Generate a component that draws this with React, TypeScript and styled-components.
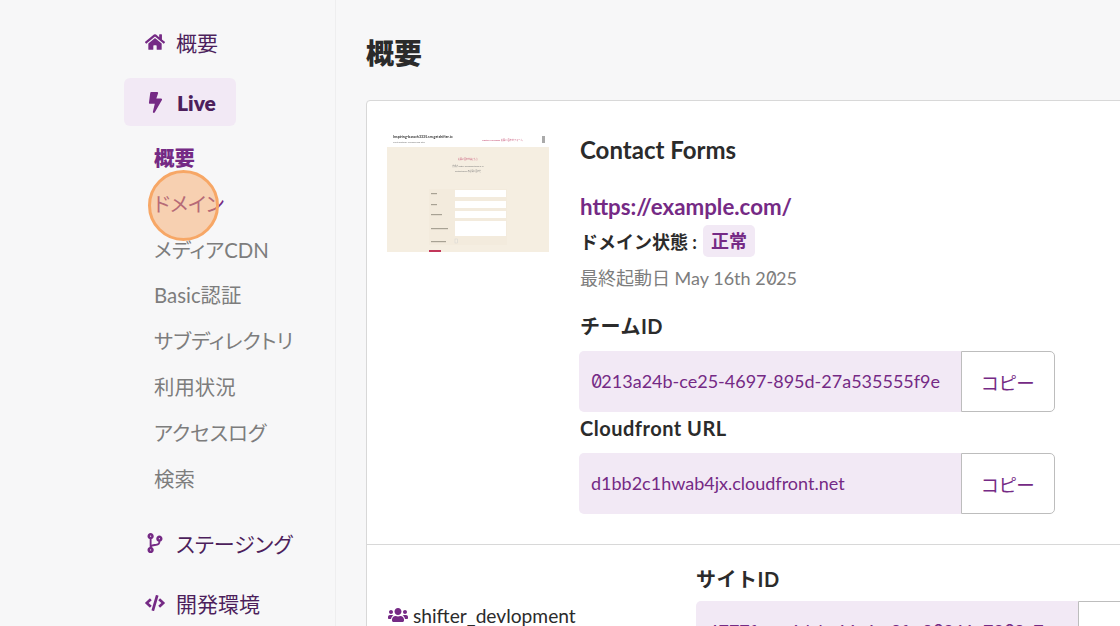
import styled, { createGlobalStyle } from "styled-components"
import { FaBolt, FaCode, FaCodeBranch, FaHome, FaUsers } from "react-icons/fa"

const FONT = `"Lato", "Noto Sans CJK JP", sans-serif`

const Global = createGlobalStyle`
    html, body {
        margin: 0;
        padding: 0;
        height: 626px;
        overflow: hidden;
        background: #f7f7f8;
        font-family: ${FONT};
    }
    * { box-sizing: border-box; }
`

const Page = styled.div`
    display: flex;
    width: 1120px;
    height: 626px;
    overflow: hidden;
`

const Sidebar = styled.nav`
    position: relative;
    flex: 0 0 336px;
    height: 626px;
    padding: 18px 0 0 124px;
    border-right: 1px solid #eeeeef;
    overflow: hidden;
    font-feature-settings: "palt";
`

const NavItem = styled.div<{ $active?: boolean }>`
    display: flex;
    align-items: center;
    gap: 11px;
    width: 112px;
    height: 48px;
    padding-left: 21px;
    border-radius: 6px;
    white-space: nowrap;
    font-size: 21px;
    font-weight: ${p => (p.$active ? 800 : 400)};
    color: #4d1f5c;
    background: ${p => (p.$active ? "#f2e9f5" : "transparent")};
    svg { flex: none; color: #752a85; }
`

const NavGroup = styled.div<{ $gap: number }>`
    margin-top: ${p => p.$gap}px;
`

const SubList = styled.div`
    display: flex;
    flex-direction: column;
    padding: 9px 0 0 30px;
`

const SubItem = styled.div<{ $state?: "current" | "hover" }>`
    height: 45.8px;
    line-height: 46px;
    white-space: nowrap;
    font-size: 20.4px;
    font-weight: ${p => (p.$state === "current" ? 800 : 400)};
    color: ${p => (p.$state ? "#752a85" : "#7d7d7d")};
`

const ClickMark = styled.div`
    position: absolute;
    left: 148px;
    top: 170px;
    width: 71px;
    height: 71px;
    border-radius: 50%;
    border: 3px solid #f7a766;
    background: rgba(248, 170, 105, 0.5);
`

const Main = styled.main`
    flex: 1;
    min-width: 0;
    padding: 30px 0 0 30px;
`

const Title = styled.h1`
    margin: 0;
    height: 70px;
    line-height: 46px;
    font-size: 28px;
    font-weight: 800;
    color: #2b2b2b;
`

const Card = styled.section`
    width: 900px;
    background: #fff;
    border: 1px solid #d8d8d8;
    border-radius: 4px 0 0 0;
`

const TopRow = styled.div`
    display: flex;
    height: 444px;
    padding: 31px 0 0 20px;
    border-bottom: 1px solid #d8d8d8;
`

const Thumb = styled.svg`
    flex: none;
    display: block;
    width: 162px;
    height: 120px;
    filter: blur(0.35px);
`

const Info = styled.div`
    display: flex;
    flex-direction: column;
    margin-left: 31px;
    width: 475px;
`

const SiteName = styled.div`
    height: 36px;
    line-height: 35px;
    font-size: 24px;
    font-weight: 700;
    color: #2b2b2b;
`

const SiteUrl = styled.a`
    margin-top: 22px;
    height: 34px;
    line-height: 34px;
    font-size: 22.3px;
    font-weight: 700;
    color: #752a85;
`

const StatusRow = styled.div`
    display: flex;
    align-items: center;
    height: 34px;
    font-size: 18px;
    font-weight: 700;
    color: #2b2b2b;
`

const StatusBadge = styled.span`
    margin-left: 6px;
    padding: 0 8px;
    height: 32px;
    line-height: 32px;
    border-radius: 5px;
    background: #f2e9f5;
    color: #752a85;
`

const Started = styled.div`
    margin-top: 2px;
    height: 36px;
    line-height: 36px;
    font-size: 18px;
    color: #7d7d7d;
`

const FieldLabel = styled.div<{ $top: number }>`
    margin-top: ${p => p.$top}px;
    height: 32px;
    line-height: 32px;
    font-size: 20px;
    font-weight: 700;
    letter-spacing: 0.5px;
    color: #2b2b2b;
`

const CopyRow = styled.div<{ $gap: number; $left: number }>`
    display: flex;
    flex: none;
    height: 61px;
    margin: ${p => p.$gap}px 0 0 ${p => p.$left}px;
`

const CopyValue = styled.div`
    flex: 1;
    display: block;
    line-height: 61px;
    min-width: 0;
    padding-left: 12px;
    white-space: nowrap;
    overflow: hidden;
    border-radius: 5px 0 0 5px;
    background: #f2e9f5;
    color: #752a85;
    font-size: 18px;
`

const CopyButton = styled.button`
    flex: 0 0 94px;
    padding: 0;
    border: 1px solid #bdbdbd;
    border-radius: 0 5px 5px 0;
    background: #fff;
    color: #752a85;
    font-family: ${FONT};
    font-size: 18.5px;
    font-feature-settings: "palt";
`

const BottomRow = styled.div`
    display: flex;
    padding: 18px 0 0 21px;
`

const Owner = styled.div`
    display: flex;
    align-items: center;
    gap: 5px;
    flex: 0 0 308px;
    height: 32px;
    margin-top: 36px;
    font-size: 19.2px;
    color: #2b2b2b;
    svg { flex: none; color: #752a85; }
`

const SiteIdCol = styled.div`
    display: flex;
    flex-direction: column;
    width: 476px;
    flex: none;
`

// the reference font draws its zero with a slash, Lato has none
const Zero = styled.span`
    font-family: "Inter", sans-serif;
    font-feature-settings: "zero";
    letter-spacing: -1px;
`

const Digits = ({ text }: { text: string }) => (
    <>
        {text.split(/(0)/).map((part, id) =>
            part === "0" ? <Zero key={id}>0</Zero> : part
        )}
    </>
)

const Copy = ({ value, gap = 9, left = -1 }: { value: string; gap?: number; left?: number }) => (
    <CopyRow $gap={gap} $left={left}>
        <CopyValue><Digits text={value} /></CopyValue>
        <CopyButton>コピー</CopyButton>
    </CopyRow>
)

// screenshot of the site, drawn small
const SiteThumb = () => (
    <Thumb viewBox="0 0 162 120">
        <rect width="162" height="120" fill="#fff" />
        <text x="6" y="5.5" fontSize="3.6" fontWeight="700" fill="#333">Inspiring-bassch3335.sm.getshifter.io</text>
        <text x="6" y="10.5" fontSize="2.6" fill="#777">Just another WordPress site</text>
        <text x="95" y="8.5" fontSize="2.2" fill="#c2456b">Ligature  Flexispace  お問い合わせフォーム</text>
        <rect x="155" y="4" width="3" height="7" fill="#aaa" />
        <rect y="15" width="162" height="105" fill="#f5eee1" />
        <text x="81" y="27.5" fontSize="2" textAnchor="middle" fill="#c2456b">お問い合わせはこちら</text>
        <text x="81" y="35" fontSize="1.9" textAnchor="middle" fill="#777">作成者 shifter_devlopment  2025.5.16</text>
        <text x="81" y="40" fontSize="1.9" textAnchor="middle" fill="#777">Contact Forms のお問い合わせ</text>
        <rect x="42" y="57" width="78" height="56" fill="#f3ebdd" />
        <rect x="68" y="58" width="51" height="7" fill="#fff" />
        <rect x="68" y="69" width="51" height="7" fill="#fff" />
        <rect x="68" y="79" width="51" height="7" fill="#fff" />
        <rect x="68" y="89" width="51" height="15" fill="#fff" />
        <rect x="68" y="107" width="2.5" height="4" fill="#f5eee1" stroke="#ccc" strokeWidth="0.4" />
        <rect x="44" y="61" width="6" height="1.2" fill="#a8a294" />
        <rect x="44" y="72" width="6" height="1.2" fill="#a8a294" />
        <rect x="44" y="82" width="11" height="1.2" fill="#a8a294" />
        <rect x="44" y="96" width="17" height="1.2" fill="#a8a294" />
        <rect x="44" y="109" width="15" height="1.2" fill="#a8a294" />
        <rect x="42" y="118" width="12" height="2" fill="#c2365a" />
    </Thumb>
)

const subItems = ["概要", "ドメイン", "メディアCDN", "Basic認証", "サブディレクトリ", "利用状況", "アクセスログ", "検索"]

export default function App() {
    return (
        <Page>
            <Global />
            <Sidebar>
                <NavItem><FaHome size={20} />概要</NavItem>
                <NavGroup $gap={12}>
                    <NavItem $active><FaBolt size={21} />Live</NavItem>
                    <SubList>
                        {subItems.map((el, id) => (
                            <SubItem key={el} $state={id === 0 ? "current" : id === 1 ? "hover" : undefined}>{el}</SubItem>
                        ))}
                    </SubList>
                </NavGroup>
                <NavGroup $gap={18}>
                    <NavItem><FaCodeBranch size={20} />ステージング</NavItem>
                </NavGroup>
                <NavGroup $gap={12}>
                    <NavItem><FaCode size={20} />開発環境</NavItem>
                </NavGroup>
                <ClickMark />
            </Sidebar>
            <Main>
                <Title>概要</Title>
                <Card>
                    <TopRow>
                        <SiteThumb />
                        <Info>
                            <SiteName>Contact Forms</SiteName>
                            <SiteUrl>https://example.com/</SiteUrl>
                            <StatusRow>ドメイン状態 : <StatusBadge>正常</StatusBadge></StatusRow>
                            <Started>最終起動日 May 16th <Digits text="2025" /></Started>
                            <FieldLabel $top={14}>チームID</FieldLabel>
                            <Copy value="0213a24b-ce25-4697-895d-27a535555f9e" />
                            <FieldLabel $top={0}>Cloudfront URL</FieldLabel>
                            <Copy value="d1bb2c1hwab4jx.cloudfront.net" />
                        </Info>
                    </TopRow>
                    <BottomRow>
                        <Owner><FaUsers size={20} />shifter_devlopment</Owner>
                        <SiteIdCol>
                            <FieldLabel $top={0}>サイトID</FieldLabel>
                            <Copy value="4777fcea-6dcb-44c6-a9fc-90261c7808c7" gap={6} left={0} />
                        </SiteIdCol>
                    </BottomRow>
                </Card>
            </Main>
        </Page>
    )
}
